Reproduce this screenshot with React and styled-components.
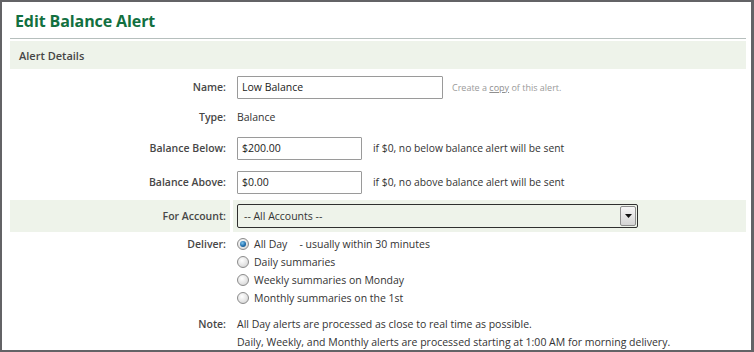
import React from "react";
import styled, { createGlobalStyle } from "styled-components";

const Global = createGlobalStyle`
  html, body { margin: 0; padding: 0; background: #fff; }
  body { font-family: "Open Sans", "Liberation Sans", sans-serif; }
  * { box-sizing: border-box; }
`;

const Frame = styled.div`
  width: 754px;
  height: 352px;
  border: 2px solid #636366;
  border-right-width: 3px;
  overflow: hidden;
  padding: 0 5px 0 8px;
  background: #fff;
`;

const Title = styled.h1`
  margin: 0;
  height: 37px;
  padding: 8px 0 0 5px;
  font-size: 16px;
  line-height: 22px;
  font-weight: 700;
  color: #12703f;
  letter-spacing: -0.1px;
  border-bottom: 1px solid #b6bfbd;
`;

const SectionHeader = styled.div`
  margin-top: 2px;
  height: 28px;
  background: #eef3ea;
  padding-left: 9px;
  display: flex;
  align-items: center;
  font-size: 11px;
  font-weight: 600;
  color: #464646;
`;

const Form = styled.div`
  display: grid;
  grid-template-columns: 220px 1fr;
  column-gap: 3px;
`;

const Label = styled.div`
  height: ${(p) => p.$h}px;
  display: flex;
  align-items: ${(p) => (p.$top ? "flex-start" : "center")};
  justify-content: flex-end;
  padding-right: 4px;
  font-size: 10.5px;
  font-weight: 600;
  color: #474747;
  background: ${(p) => (p.$shaded ? "#eef3ea" : "transparent")};
  margin-top: ${(p) => p.$mt || 0}px;
`;

const Value = styled.div`
  height: ${(p) => p.$h}px;
  display: flex;
  flex-direction: ${(p) => (p.$col ? "column" : "row")};
  align-items: ${(p) => (p.$col ? "flex-start" : "center")};
  padding-left: 4px;
  font-size: 10.5px;
  color: #333;
  background: ${(p) => (p.$shaded ? "#eef3ea" : "transparent")};
  margin-top: ${(p) => p.$mt || 0}px;
`;

const TextInput = styled.input`
  width: ${(p) => p.$w}px;
  height: 23px;
  border: 1px solid #9a9a9a;
  border-radius: 1px;
  padding: 0 4px;
  font-family: inherit;
  font-size: 10.5px;
  color: #222;
  background: #fff;
  outline: none;
`;

const Hint = styled.span`
  margin-left: ${(p) => p.$ml}px;
  font-size: ${(p) => (p.$small ? "9px" : "10.3px")};
  color: ${(p) => (p.$small ? "#9a9a9a" : "#333")};
`;

const CopyLink = styled.span`
  text-decoration: underline;
  color: #8f8f8f;
`;

const SelectBox = styled.div`
  width: 401px;
  height: 24px;
  border: 1px solid #2f2f2f;
  border-radius: 2px;
  display: flex;
  align-items: center;
  justify-content: space-between;
  padding-left: 6px;
  font-size: 10.5px;
  color: #333;
`;

const ArrowButton = styled.div`
  width: 16px;
  height: 20px;
  margin-right: 1px;
  border: 1px solid #8d8d8d;
  border-radius: 2px;
  background: linear-gradient(#f6f6f6, #d4d4d4);
  display: flex;
  align-items: center;
  justify-content: center;
`;

const Line = styled.div`
  height: 18px;
  display: flex;
  align-items: center;
  white-space: nowrap;
`;

const Radio = styled.span`
  width: 12px;
  height: 12px;
  border-radius: 50%;
  border: 1px solid #8b8b8b;
  background: radial-gradient(circle at 40% 35%, #ffffff 0%, #e2e2e2 60%, #c8c8c8 100%);
  display: inline-flex;
  align-items: center;
  justify-content: center;
  margin-right: 5px;
  flex: none;
  &::after {
    content: "";
    display: ${(p) => (p.$on ? "block" : "none")};
    width: 6px;
    height: 6px;
    border-radius: 50%;
    background: radial-gradient(circle at 40% 35%, #7fc4ee 0%, #1f6fae 55%, #0d3f6b 100%);
  }
`;

const Extra = styled.span`
  margin-left: 12px;
`;

const radios = [
  { label: "All Day", on: true, extra: "- usually within 30 minutes" },
  { label: "Daily summaries" },
  { label: "Weekly summaries on Monday" },
  { label: "Monthly summaries on the 1st" },
];

export default function App() {
  return (
    <>
      <Global />
      <Frame>
        <Title>Edit Balance Alert</Title>
        <SectionHeader>Alert Details</SectionHeader>
        <Form>
          <Label $h={36}>Name:</Label>
          <Value $h={36}>
            <TextInput $w={206} defaultValue="Low Balance" />
            <Hint $ml={9} $small>
              Create a <CopyLink>copy</CopyLink> of this alert.
            </Hint>
          </Value>

          <Label $h={24}>Type:</Label>
          <Value $h={24}>Balance</Value>

          <Label $h={38}>Balance Below:</Label>
          <Value $h={38}>
            <TextInput $w={125} defaultValue="$200.00" />
            <Hint $ml={11}>if $0, no below balance alert will be sent</Hint>
          </Value>

          <Label $h={30}>Balance Above:</Label>
          <Value $h={30}>
            <TextInput $w={125} defaultValue="$0.00" />
            <Hint $ml={11}>if $0, no above balance alert will be sent</Hint>
          </Value>

          <Label $h={32} $mt={3} $shaded>For Account:</Label>
          <Value $h={32} $mt={3} $shaded>
            <SelectBox>
              -- All Accounts --
              <ArrowButton>
                <svg width="7" height="4" viewBox="0 0 7 4">
                  <path d="M0 0 L7 0 L3.5 4 Z" fill="#111" />
                </svg>
              </ArrowButton>
            </SelectBox>
          </Value>

          <Label $h={72} $mt={3} $top>
            <Line>Deliver:</Line>
          </Label>
          <Value $h={72} $mt={3} $col>
            {radios.map((r) => (
              <Line key={r.label}>
                <Radio $on={r.on} />
                {r.label}
                {r.extra && <Extra>{r.extra}</Extra>}
              </Line>
            ))}
          </Value>

          <Label $h={40} $mt={8} $top>
            <Line>Note:</Line>
          </Label>
          <Value $h={40} $mt={8} $col>
            <Line>All Day alerts are processed as close to real time as possible.</Line>
            <Line>
              Daily, Weekly, and Monthly alerts are processed starting at 1:00 AM for morning
              delivery.
            </Line>
          </Value>
        </Form>
      </Frame>
    </>
  );
}
